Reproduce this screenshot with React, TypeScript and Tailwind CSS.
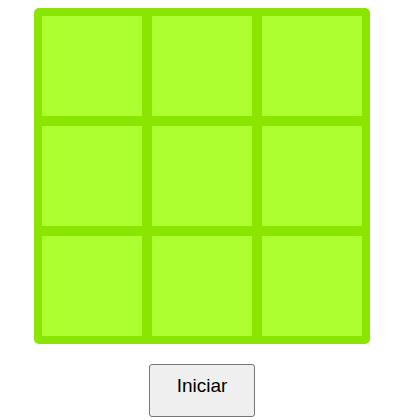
import { useState } from 'react';

export default function App() {
  const [celdas, setCeldas] = useState<string[]>(Array(9).fill(''));

  const iniciar = () => setCeldas(Array(9).fill(''));

  return (
    <div className="flex flex-col items-center pt-2 font-['Liberation_Sans',Arial,sans-serif]">
      <div className="grid grid-cols-[repeat(3,100px)] grid-rows-[repeat(3,100px)] gap-[10px] rounded-[5px] bg-[#8ae500] p-2">
        {celdas.map((c, i) => (
          <div key={i} className="flex items-center justify-center bg-[#adff2f] text-5xl">
            {c}
          </div>
        ))}
      </div>
      <button
        onClick={iniciar}
        className="mt-5 h-[53px] w-[106px] rounded-[3px] border border-[#767676] bg-[#efefef] pb-2 text-[19px] text-black"
      >
        Iniciar
      </button>
    </div>
  );
}
